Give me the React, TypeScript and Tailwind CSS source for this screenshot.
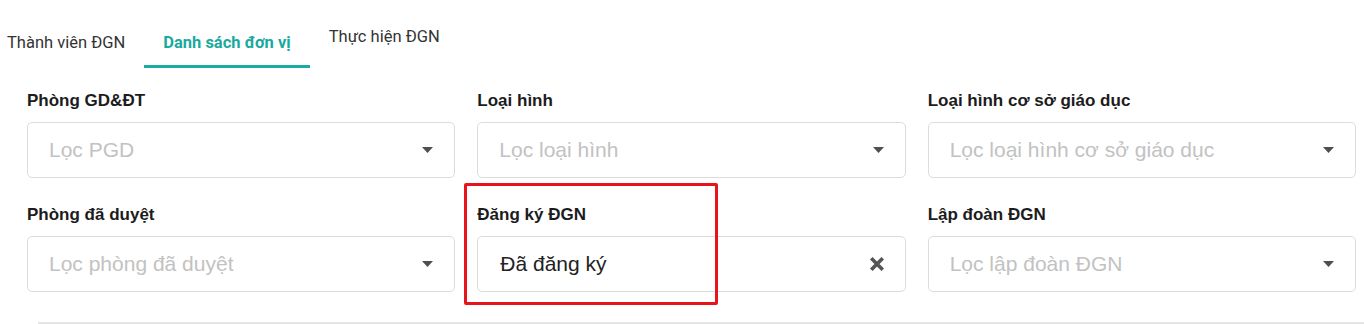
import React from 'react';

type Filter = {
  label: string;
  placeholder: string;
  value?: string;
  highlight?: boolean;
};

const filters: Filter[] = [
  { label: 'Phòng GD&ĐT', placeholder: 'Lọc PGD' },
  { label: 'Loại hình', placeholder: 'Lọc loại hình' },
  { label: 'Loại hình cơ sở giáo dục', placeholder: 'Lọc loại hình cơ sở giáo dục' },
  { label: 'Phòng đã duyệt', placeholder: 'Lọc phòng đã duyệt' },
  { label: 'Đăng ký ĐGN', placeholder: 'Chọn', value: 'Đã đăng ký', highlight: true },
  { label: 'Lập đoàn ĐGN', placeholder: 'Lọc lập đoàn ĐGN' },
];

const Caret = () => (
  <svg width="11" height="6" viewBox="0 0 11 6" className="shrink-0">
    <path d="M0 0 L11 0 L5.5 6 Z" fill="#4f4f4f" />
  </svg>
);

const Clear = () => (
  <svg width="14" height="14" viewBox="0 0 14 14" className="shrink-0">
    <path d="M2.5 2.5 L11.5 11.5 M11.5 2.5 L2.5 11.5" stroke="#555" strokeWidth="3.6" strokeLinecap="square" />
  </svg>
);

export default function App() {
  return (
    <div className="w-[1364px] h-[324px] bg-white overflow-hidden font-['Liberation_Sans',Arial,sans-serif]">
      {/* tabs */}
      <div className="flex h-[68px] items-stretch font-['Roboto',sans-serif] text-[16.5px] text-[#333]">
        <div className="pl-[7px] pr-[19px] pt-[31px]">Thành viên ĐGN</div>
        <div className="px-[19px] pt-[31px] font-bold text-[#1aa9a0] border-b-[3px] border-[#1aaca3]">Danh sách đơn vị</div>
        <div className="px-[19px] pt-[25px]">Thực hiện ĐGN</div>
      </div>

      {/* filters */}
      <div className="grid grid-cols-3 gap-x-[22px] gap-y-[26px] pl-[27px] pr-[8px] pt-[22px]">
        {filters.map((f) => (
          <div key={f.label} className="relative">
            {f.highlight && (
              <div className="absolute left-[-13px] top-[-21px] w-[254px] h-[122px] border-[3px] border-[#e8141c] rounded-[2px] pointer-events-none" />
            )}
            <div className="h-[22px] leading-[22px] text-[17px] font-bold text-[#1c1c1c]">{f.label}</div>
            <div className="mt-[10px] h-[56px] border border-[#dcdcdc] rounded-[5px] flex items-center justify-between pr-[21px]">
              {f.value ? (
                <span className="pl-[22px] text-[21px] text-[#222]">{f.value}</span>
              ) : (
                <span className="pl-[21px] text-[21px] text-[#c2c2c2]">{f.placeholder}</span>
              )}
              {f.value ? <Clear /> : <Caret />}
            </div>
          </div>
        ))}
      </div>

      <div className="ml-[38px] mt-[30px] border-t-2 border-[#e6e6e6]" />
    </div>
  );
}
